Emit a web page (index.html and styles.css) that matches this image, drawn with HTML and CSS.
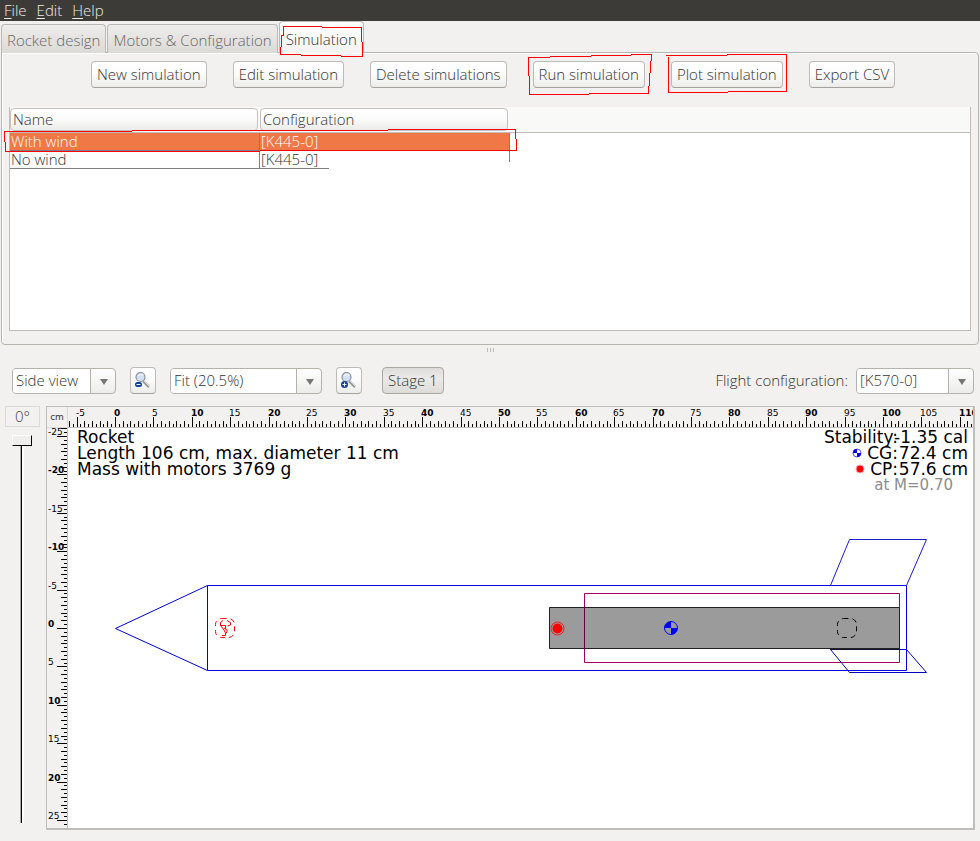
FILE: index.html
```html
<!DOCTYPE html>
<html lang="en">
<head>
<meta charset="utf-8">
<title>Rocket simulation</title>
<link rel="stylesheet" href="styles.css">
</head>
<body>
<nav class="menubar">
  <a href="#"><u>F</u>ile</a>
  <a href="#"><u>E</u>dit</a>
  <a href="#"><u>H</u>elp</a>
</nav>

<div class="tabs" role="tablist">
  <button class="tab" role="tab">Rocket design</button>
  <button class="tab" role="tab">Motors &amp; Configuration</button>
  <button class="tab tab-active" role="tab" aria-selected="true">Simulation
    <svg class="mark mark-tab" width="90" height="44"><path d="M3.500 14V5.500H42M42 6.500H81.500V21M82.500 21V35.500H61M61 34.500H21M21 33.500H.5V26M1.500 26V14H3.500"/></svg>
  </button>
</div>

<main class="panel">
  <div class="actions">
    <button class="btn">New simulation</button>
    <button class="btn">Edit simulation</button>
    <button class="btn">Delete simulations</button>
    <button class="btn">Run simulation
      <svg class="mark mark-run" width="126" height="44"><path d="M1.500 4.500H22M22 3.500H63M63 2.500H103M103 1.500H123.500V8M122.500 8V20M121.500 20V33M120.500 33V40.500H61M61 41.500H1.500V23M.5 23V4.500H2"/></svg>
    </button>
    <button class="btn">Plot simulation
      <svg class="mark mark-plot" width="124" height="42"><path d="M0 2.500H61M61 1.500H120.500V38.500H62M62 39.500H2.500V4"/></svg>
    </button>
    <button class="btn">Export CSV</button>
  </div>

  <div class="list">
    <table>
      <thead><tr><th><span>Name</span></th><th><span>Configuration</span></th></tr></thead>
      <tbody>
        <tr class="selected"><td>With wind</td><td>[K445-0]</td></tr>
        <tr><td>No wind</td><td>[K445-0]</td></tr>
      </tbody>
    </table>
    <svg class="mark mark-row" width="520" height="28"><path d="M0 4.500H128M128 3.500H384M384 2.500H511.500V12M512.500 12V23.500H256M256 24.500H1.500V15M.5 15V4"/></svg>
  </div>
</main>

<div class="grip"><i></i><i></i><i></i></div>

<div class="toolbar">
  <span class="combo combo-view"><select aria-label="View"><option>Side view</option></select></span>
  <button class="icon-btn" aria-label="Zoom out">
    <svg width="18" height="18" viewBox="0 0 18 18"><path d="M9 9l6 6" stroke="#999" stroke-width="2.500"/><path d="M10 9l6 6" stroke="#ddd"/><circle cx="6.500" cy="5" r="4.500" fill="#cfe0f7" stroke="#8a8f98" stroke-width="1.200"/><path d="M4 4q2-2.500 5-1" stroke="#fff" fill="none"/><rect x="1" y="10" width="7" height="5" rx="2.500" fill="#183f98"/><path d="M2.500 12.500h4" stroke="#fff"/></svg>
  </button>
  <span class="combo combo-zoom"><select aria-label="Zoom"><option>Fit (20.5%)</option></select></span>
  <button class="icon-btn" aria-label="Zoom in">
    <svg width="18" height="18" viewBox="0 0 18 18"><path d="M9 9l6 6" stroke="#999" stroke-width="2.500"/><path d="M10 9l6 6" stroke="#ddd"/><circle cx="6.500" cy="5" r="4.500" fill="#cfe0f7" stroke="#8a8f98" stroke-width="1.200"/><path d="M4 4q2-2.500 5-1" stroke="#fff" fill="none"/><circle cx="4.500" cy="12.500" r="3.500" fill="#183f98"/><path d="M2.500 12.500h4M4.500 10.500v4" stroke="#fff"/></svg>
  </button>
  <button class="btn btn-stage" aria-pressed="true">Stage 1</button>
  <label class="flight" for="flight">Flight configuration:</label>
  <span class="combo combo-flight"><select id="flight"><option>[K570-0]</option></select></span>
</div>

<section class="view">
  <div class="rotation">
    <input class="angle" type="text" value="0°" aria-label="Rotation angle">
    <input class="slider" type="range" min="0" max="360" value="0" aria-label="Rotation">
  </div>
  <div class="figure">
    <div class="unit">cm</div>
    <div class="ruler-x"><svg id="rulerX" width="100%" height="20"></svg></div>
    <div class="ruler-y"><svg id="rulerY" width="20" height="100%"></svg></div>
    <div class="plot">
      <svg class="rocket" width="100%" height="100%">
        <g transform="translate(-68 -428)" fill="none">
          <g stroke="#0000dc">
            <path d="M207.500 585.500L115.500 628.500L207.500 670.500"/>
            <path d="M207.500 585.500H906.500V670.500H207.500Z"/>
            <path d="M830.500 585.500L849.500 539.500H926.500L906.500 585.500" stroke="#1a1acc"/>
          </g>
          <path d="M584.500 593.500H899.500V662.500H584.500Z" stroke="#a00060"/>
          <path d="M549.500 607.500H899.500V648.500H549.500Z" fill="#9b9b9b" stroke="#222"/>
          <path d="M584.500 608V648" stroke="#620040"/>
          <path d="M830.500 649.500H906.500L926.500 672.500H849.500Z" stroke="#0000c0"/>
          <path d="M830 649.500H900" stroke="#111133"/>
          <rect x="837.500" y="618.500" width="19" height="19" rx="6" stroke="#000" stroke-dasharray="5 4"/>
          <g stroke="#f00">
            <rect x="215.500" y="618.500" width="19" height="19" rx="6" stroke-dasharray="5 4"/>
            <path d="M220.500 625V622.500L223 620.500M227 620.500L230.500 622.500V625L227.500 626M220 625.500H225.500V629M221 626L224 630L226 634M222 635.500H225.500V633M224 628L227 630V632L225 634"/>
          </g>
          <circle cx="557.500" cy="628.500" r="6.500" stroke="#e22"/>
          <circle cx="557.500" cy="628.500" r="5" fill="#f00"/>
          <circle cx="671" cy="628" r="6.500" stroke="#00f"/>
          <path d="M671 628V621.500A6.500 6.500 0 0 0 664.500 628ZM671 628V634.500A6.500 6.500 0 0 0 677.500 628Z" fill="#00f"/>
        </g>
      </svg>
      <div class="summary">
        <p>Rocket</p>
        <p>Length 106 cm, max. diameter 11 cm</p>
        <p>Mass with motors 3769 g</p>
      </div>
      <div class="stability">
        <span>Stability:</span><span>-1.35 cal</span>
        <span><svg width="10" height="10" viewBox="0 0 10 10"><circle cx="5" cy="5" r="4" fill="#fff" stroke="#55f"/><path d="M5 5V1A4 4 0 0 0 1 5ZM5 5V9A4 4 0 0 0 9 5Z" fill="#00f"/></svg> CG:</span><span>72.4 cm</span>
        <span><svg width="10" height="10" viewBox="0 0 10 10"><circle cx="5" cy="5" r="4" fill="#f00" stroke="#faa"/></svg> CP:</span><span>57.6 cm</span>
        <span class="mach">at M=0.70</span>
      </div>
    </div>
  </div>
</section>
<script src="rulers.js"></script>
</body>
</html>
```
FILE: rulers.js
```js
// Pixels per centimetre at the current zoom.
const SCALE = 7.68;

function drawRuler(svg, origin, length, vertical) {
  let ticks = "";
  let labels = "";
  const first = Math.ceil(-origin / SCALE * 2);
  const last = Math.floor((length - origin) / SCALE * 2);
  for (let i = first; i <= last; i++) {
    const p = Math.round(origin + i * SCALE / 2) + 0.5;
    const size = i % 10 === 0 ? 10 : i % 2 === 0 ? 6 : 3;
    ticks += vertical ? `M${20 - size} ${p}H20` : `M${p} ${20 - size}V20`;
    if (i % 10 === 0) {
      const cm = i / 2;
      const x = vertical ? 1 : Math.floor(p) - 1;
      const y = vertical ? Math.floor(p) - 1 : 9;
      labels += `<text x="${x}" y="${y}" class="${cm % 10 === 0 ? "major" : "minor"}">${cm}</text>`;
    }
  }
  svg.innerHTML = `<path d="${ticks}" stroke="#000"/>${labels}`;
}

function drawRulers() {
  const x = document.getElementById("rulerX");
  const y = document.getElementById("rulerY");
  drawRuler(x, 47, x.parentNode.clientWidth, false);
  drawRuler(y, 200, y.parentNode.clientHeight, true);
}

drawRulers();
window.addEventListener("resize", drawRulers);
```
FILE: styles.css
```css
* { box-sizing: border-box; }
body {
  margin: 0;
  min-height: 100vh;
  display: flex;
  flex-direction: column;
  background: #f2f1f0;
  color: #333;
  font: 300 15px/18px "Open Sans", "Noto Sans", sans-serif;
}
button, input, select { font: inherit; color: inherit; margin: 0; }

.menubar {
  display: flex;
  gap: 10px;
  height: 21px;
  padding: 0 4px;
  background: #3c3b37;
  line-height: 21px;
}
.menubar a { color: #f0ece2; text-decoration: none; }
.menubar u { text-underline-offset: 2px; }

.tabs {
  display: flex;
  align-items: flex-end;
  gap: 1px;
  height: 32px;
  padding-left: 1px;
}
.tab {
  position: relative;
  height: 29px;
  padding: 2px 5px 0;
  border: 1px solid #bbb9b5;
  border-bottom: 0;
  border-radius: 4px 4px 0 0;
  background: linear-gradient(#eeedeb, #dcdad7);
  color: #666;
  white-space: nowrap;
}
.tab-active {
  z-index: 1;
  height: 32px;
  padding: 2px 6px 0;
  background: linear-gradient(#fff, #f4f3f2);
  color: #333;
}
.mark {
  position: absolute;
  fill: none;
  stroke: #f00;
  pointer-events: none;
  shape-rendering: crispEdges;
}
.mark-tab { left: 0; top: -1px; }
.mark-run { left: -6px; top: -9px; }
.mark-plot { left: -6px; top: -9px; }
.mark-row { left: -6px; top: 20px; }

.panel {
  margin: -1px 1px 0;
  padding: 8px 7px 13px;
  border: 1px solid #b8b5b0;
  border-radius: 0 4px 4px 4px;
  box-shadow: inset 1px 1px #fff;
}
.actions {
  display: flex;
  justify-content: center;
  gap: 26px;
  padding-left: 6px;
}
.btn, .icon-btn {
  position: relative;
  height: 27px;
  padding: 0 5px 2px;
  border: 1px solid #bdbbb8;
  border-bottom-color: #a5a29d;
  border-radius: 4px;
  background: linear-gradient(#fff, #fbfbfb 50%, #ececea);
  white-space: nowrap;
}
.list {
  position: relative;
  height: 224px;
  margin-top: 19px;
  border: 1px solid #c0bdb8;
  border-top: 0;
  background: linear-gradient(#f9f9f8 25px, #c0bdb8 25px, #c0bdb8 26px, #fff 26px);
}
table { border-collapse: separate; border-spacing: 0; table-layout: fixed; width: 500px; }
th { padding: 1px 2px 0 0; font-weight: inherit; text-align: left; }
th span {
  display: block;
  height: 23px;
  padding: 1px 2px;
  border: 1px solid #c4c2be;
  border-radius: 4px;
  background: linear-gradient(#fff, #fbfbfb 50%, #ebebe9);
}
thead::after { content: ""; display: block; height: 2px; }
td {
  position: relative;
  height: 18px;
  padding: 0 1px;
  border-right: 1px solid #7f7f7f;
  border-bottom: 1px solid #7f7f7f;
  line-height: 17px;
}
tbody tr:last-child td:last-child { border-color: transparent; }
tbody tr:last-child td:last-child::after {
  content: "";
  position: absolute;
  left: 0;
  bottom: -1px;
  width: 69px;
  height: 1px;
  background: #7f7f7f;
}
tbody tr:last-child td:last-child::before {
  content: "";
  position: absolute;
  right: -1px;
  top: 0;
  width: 1px;
  height: 11px;
  background: #7f7f7f;
}
.selected { background: #f07746; color: #fff; }

.grip { display: flex; justify-content: center; gap: 2px; padding: 3px 0 15px; }
.grip i { width: 1px; height: 4px; background: #bbb; }

.toolbar { display: flex; align-items: center; padding: 0 6px 0 12px; height: 27px; }
.combo {
  position: relative;
  height: 26px;
  border: 1px solid #b5b2ad;
  border-radius: 4px;
  background: linear-gradient(#fff, #ececea);
}
.combo::after {
  content: "";
  position: absolute;
  right: 7px;
  top: 10px;
  border: 4px solid transparent;
  border-top: 6px solid #777;
  border-bottom: 0;
  pointer-events: none;
}
.combo select {
  display: block;
  width: 100%;
  height: 24px;
  padding: 0 0 2px 3px;
  border: 0;
  border-radius: 3px;
  appearance: none;
  background: linear-gradient(to left, transparent 24px, #b5b2ad 24px, #b5b2ad 25px, #fff 25px);
}
.combo-view { width: 104px; }
.combo-zoom { width: 152px; margin-left: 14px; }
.combo-flight { width: 118px; margin-left: 8px; }
.icon-btn { width: 26px; margin-left: 14px; padding: 3px; }
.icon-btn svg { display: block; }
.btn-stage { margin-left: 20px; border-color: #aaa8a3; background: linear-gradient(#dddcda, #ebeae8 40%, #dddcd9); }
.flight { margin-left: auto; padding-bottom: 2px; }

.view { flex: 1; display: flex; gap: 6px; padding: 12px 5px 11px; }
.rotation { display: flex; flex-direction: column; width: 35px; }
.angle {
  width: 100%;
  height: 21px;
  padding: 0 0 2px;
  border: 1px solid #dcdad7;
  background: transparent;
  color: #3c4652;
  text-align: center;
}
.slider {
  appearance: none;
  writing-mode: vertical-lr;
  flex: 1;
  width: 20px;
  margin: 8px 0 7px 7px;
  background: transparent;
}
.slider::-webkit-slider-runnable-track {
  background: linear-gradient(to right, transparent 8px, #aaa 8px, #aaa 9px, #000 9px, #000 10px, #fff 10px, #fff 12px, transparent 12px);
}
.slider::-webkit-slider-thumb {
  appearance: none;
  width: 20px;
  height: 11px;
  border: 1px solid #fff;
  border-right-color: #000;
  border-bottom-color: #000;
  background: #efeeec;
}
.figure {
  flex: 1;
  display: grid;
  grid-template-columns: 21px minmax(0, 1fr);
  grid-template-rows: 21px minmax(400px, 1fr);
  border: 1px solid #bfbdb9;
  border-right-width: 2px;
  border-bottom-width: 2px;
  font-family: "DejaVu Sans", sans-serif;
  font-weight: 400;
}
.unit {
  border-right: 1px solid #dcdad7;
  border-bottom: 1px solid #dcdad7;
  font-size: 9px;
  line-height: 20px;
  text-align: center;
}
.ruler-x, .ruler-y { overflow: hidden; min-height: 0; font-size: 9px; }
.ruler-x { border-bottom: 1px solid #bfbdb9; }
.ruler-y { border-right: 1px solid #bfbdb9; }
.ruler-x svg, .ruler-y svg { display: block; }
.ruler-x path, .ruler-y path { shape-rendering: crispEdges; }
.minor { fill: #000; }
.major { fill: #000; font-weight: 700; }
.plot {
  position: relative;
  display: flex;
  justify-content: space-between;
  align-items: flex-start;
  padding: 1px 5px 0 9px;
  background: #fff;
  color: #000;
  font-size: 17px;
  line-height: 16px;
}
.rocket { position: absolute; inset: 0; }
.summary, .stability { position: relative; }
.summary p { margin: 0; }
.stability { display: grid; grid-template-columns: auto 70px; justify-items: end; white-space: nowrap; }
.stability svg { margin-bottom: 1px; }
.stability .mach {
  grid-column: 1 / 3;
  padding-right: 15px;
  color: #8c8c8c;
  font-size: 15px;
}
```
